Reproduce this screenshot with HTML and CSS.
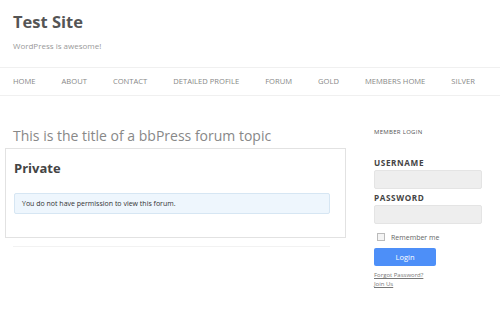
FILE: index.html
```html
<!DOCTYPE html>
<html lang="en">
<head>
  <meta charset="UTF-8">
  <meta name="viewport" content="width=device-width, initial-scale=1.0">
  <title>Test Site</title>
  <link rel="stylesheet" href="styles.css">
</head>
<body>

  <header class="site-header">
    <h1 class="site-title">Test Site</h1>
    <p class="site-desc">WordPress is awesome!</p>
  </header>

  <nav class="main-nav">
    <a href="#">Home</a>
    <a href="#">About</a>
    <a href="#">Contact</a>
    <a href="#">Detailed Profile</a>
    <a href="#">Forum</a>
    <a href="#">Gold</a>
    <a href="#">Members Home</a>
    <a href="#">Silver</a>
  </nav>

  <div class="page">
    <main class="content">
      <h2 class="entry-title">This is the title of a bbPress forum topic</h2>
      <div class="forum-box">
        <h3>Private</h3>
        <div class="notice">You do not have permission to view this forum.</div>
      </div>
      <div class="rule"></div>
    </main>

    <aside class="sidebar">
      <h4 class="widget-title">Member Login</h4>
      <label class="field-label">Username</label>
      <input type="text" class="field">
      <label class="field-label">Password</label>
      <input type="password" class="field">
      <label class="remember"><span class="box"></span> Remember me</label>
      <button class="login">Login</button>
      <a href="#" class="small-link">Forgot Password?</a>
      <a href="#" class="small-link">Join Us</a>
    </aside>
  </div>

</body>
</html>
```

FILE: styles.css
```css
body {
  margin: 0;
  background: #fff;
  font-family: 'Open Sans', sans-serif;
  color: #444;
}
.site-header {
  padding: 10px 13px 0;
  height: 57px;
  box-sizing: border-box;
}
.site-title {
  margin: 0;
  font-size: 16.5px;
  font-weight: 700;
  line-height: 24px;
  color: #555;
}
.site-desc {
  margin: 6px 0 0;
  font-size: 8px;
  color: #999;
}
.main-nav {
  margin-top: 10px;
  border-top: 1px solid #f0f0f0;
  border-bottom: 1px solid #f0f0f0;
  height: 27px;
  display: flex;
  align-items: center;
  gap: 26px;
  padding-left: 13px;
}
.main-nav a {
  font-size: 7.6px;
  text-transform: uppercase;
  color: #888;
  text-decoration: none;
  margin-top: -1px;
}
.page {
  display: flex;
  padding-top: 28px;
}
.content {
  width: 346px;
}
.entry-title {
  margin: 3px 0 3px 13px;
  font-size: 14px;
  font-weight: 400;
  line-height: 18px;
  color: #888;
}
.forum-box {
  margin-left: 5px;
  border: 1px solid #e2e2e2;
  height: 90px;
  box-sizing: border-box;
  padding: 10px 15px 0 8px;
}
.forum-box h3 {
  margin: 0;
  font-size: 13px;
  font-weight: 700;
  line-height: 18px;
  color: #444;
}
.notice {
  margin-top: 16px;
  background: #eef6fd;
  border: 1px solid #d6e6f3;
  border-radius: 2px;
  font-size: 7px;
  line-height: 19px;
  padding: 0 7px;
  color: #333;
}
.rule {
  margin: 8px 16px 0 13px;
  height: 1px;
  background: #f2f2f2;
}
.sidebar {
  margin-left: 28px;
  width: 108px;
  display: flex;
  flex-direction: column;
  align-items: flex-start;
}
.widget-title {
  margin: 4px 0 21px;
  font-size: 6px;
  line-height: 8px;
  font-weight: 400;
  text-transform: uppercase;
  letter-spacing: 0.3px;
  color: #555;
}
.field-label {
  font-size: 8.2px;
  font-weight: 700;
  text-transform: uppercase;
  letter-spacing: 0.6px;
  color: #444;
  line-height: 11px;
  margin-bottom: 2px;
}
.field {
  width: 108px;
  height: 19px;
  box-sizing: border-box;
  border: 1px solid #e4e4e4;
  border-radius: 2px;
  background: #eee;
  margin: 0 0 3px;
  padding: 0;
}
.remember {
  display: flex;
  align-items: center;
  height: 10px;
  font-size: 7px;
  color: #666;
  margin: 5px 0 6px 3px;
  gap: 6px;
}
.remember .box {
  width: 6px;
  height: 6px;
  border: 1px solid #bbb;
  background: #f4f4f4;
}
.login {
  width: 62px;
  height: 18px;
  border: none;
  border-radius: 2px;
  background: #4d8ff8;
  color: #fff;
  font-family: 'Open Sans', sans-serif;
  font-size: 7.5px;
  padding: 0;
  margin-bottom: 5px;
}
.small-link {
  font-size: 6px;
  color: #777;
  line-height: 9px;
}
```
